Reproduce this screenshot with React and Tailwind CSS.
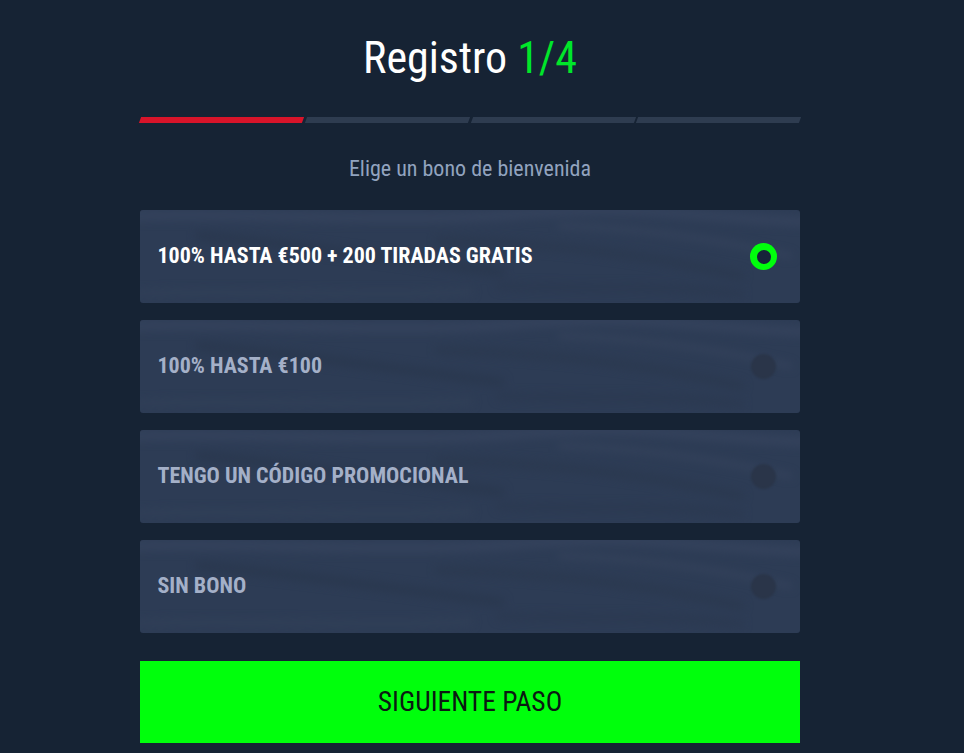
const bonuses = [
  { label: "100% HASTA €500 + 200 TIRADAS GRATIS", active: true },
  { label: "100% HASTA €100" },
  { label: "TENGO UN CÓDIGO PROMOCIONAL" },
  { label: "SIN BONO" },
];

// blurred wave texture behind the card
function CardTexture() {
  return (
    <svg className="absolute inset-0 h-full w-full" viewBox="0 0 660 93" preserveAspectRatio="none" aria-hidden="true">
      <g fill="none" strokeLinecap="round" style={{ filter: "blur(4px)" }}>
        <path d="M-10 6 C120 2 260 14 380 4 S560 8 670 12" stroke="#34425c" strokeWidth="10" />
        <path d="M420 16 C500 18 580 30 650 46" stroke="#35435c" strokeWidth="5" />
        <path d="M60 26 C160 34 260 50 360 62" stroke="#2a384f" strokeWidth="9" />
        <path d="M300 30 C400 34 500 42 600 66" stroke="#2b3950" strokeWidth="8" />
        <path d="M-10 84 C100 78 220 88 330 82" stroke="#314058" strokeWidth="6" />
        <path d="M360 76 C440 80 520 74 600 84" stroke="#2b3951" strokeWidth="7" />
      </g>
    </svg>
  );
}

function BonusCard({ label, active }) {
  return (
    <div className="relative flex h-[93px] items-center justify-between overflow-hidden rounded-[3px] bg-[#2d3c55] pl-[17.5px] pr-[23px]">
      <CardTexture />
      <span className={`relative mb-[2px] text-[22px] font-bold leading-none [font-stretch:75%] ${active ? "text-white" : "text-[#a4b0c8]"}`}>
        {label}
      </span>
      {active ? (
        <span className="relative flex h-[27px] w-[27px] items-center justify-center rounded-full bg-[#00ff0c]">
          <span className="h-[14px] w-[14px] rounded-full bg-[#17233a]" />
        </span>
      ) : (
        <span className="relative mr-[1px] h-[25px] w-[25px] rounded-full bg-[#2a3549] blur-[1px]" />
      )}
    </div>
  );
}

export default function App() {
  return (
    <div className="flex h-[753px] flex-col items-center overflow-hidden bg-[#162334] pr-[24px] font-['Roboto',sans-serif]">
      <h1 className="mt-[32px] text-[44px] font-normal leading-[52px] text-white [font-stretch:75%]">
        Registro <span className="text-[#00e62a]">1/4</span>
      </h1>

      <div className="mt-[33px] flex h-[6px] w-[660px] gap-[3px]">
        <div className="flex-1 -skew-x-[20deg] bg-[#d8142a]" />
        <div className="flex-1 -skew-x-[20deg] bg-[#2e3c50]" />
        <div className="flex-1 -skew-x-[20deg] bg-[#2e3c50]" />
        <div className="flex-1 -skew-x-[20deg] bg-[#2e3c50]" />
      </div>

      <p className="mt-[33px] text-[22px] leading-[26px] text-[#92a3bf] [font-stretch:75%]">
        Elige un bono de bienvenida
      </p>

      <div className="mt-[28px] flex w-[660px] flex-col gap-[17px]">
        {bonuses.map((b) => (
          <BonusCard key={b.label} label={b.label} active={b.active} />
        ))}
      </div>

      <button className="mt-[28px] h-[82px] w-[660px] bg-[#00ff0c] text-[27.5px] font-normal text-[#0b1a12] [font-stretch:75%]">
        SIGUIENTE PASO
      </button>
    </div>
  );
}
